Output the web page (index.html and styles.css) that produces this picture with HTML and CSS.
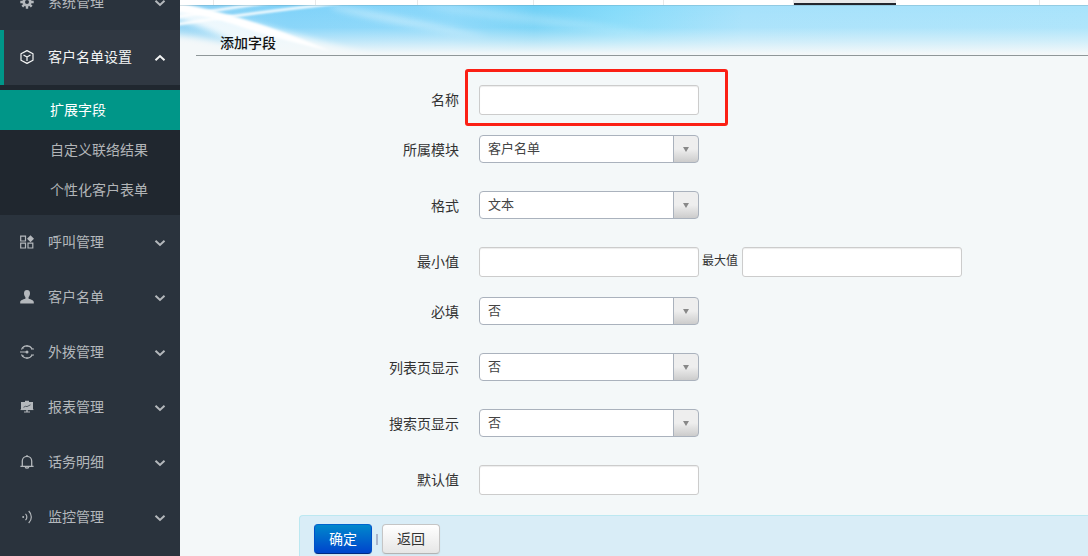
FILE: index.html
```html
<!DOCTYPE html>
<html lang="zh-CN">
<head>
<meta charset="utf-8">
<title>添加字段</title>
<link rel="stylesheet" href="styles.css">
</head>
<body>
<svg class="sprite" aria-hidden="true">
  <symbol id="chevron" viewBox="0 0 12 8"><path d="M1.500 1.800L6 6l4.500-4.200" fill="none" stroke="currentColor" stroke-width="2"/></symbol>
</svg>
<div class="app">
  <nav class="sidebar">
    <ul class="menu">
      <li><a class="menu-link" href="#">
        <svg class="icon" viewBox="0 0 14 14"><circle cx="7" cy="7" r="3.3" fill="none" stroke="currentColor" stroke-width="2.6"/><path d="M7 .3v3M7 10.700v3M.3 7h3M10.700 7h3M2.300 2.300l2 2M9.700 9.700l2 2M2.300 11.700l2-2M9.700 4.300l2-2" stroke="currentColor" stroke-width="2.400"/></svg>
        <span class="menu-text">系统管理</span><svg class="chevron"><use href="#chevron"/></svg></a></li>
      <li><a class="menu-link is-open" href="#">
        <svg class="icon" viewBox="0 0 14 14"><path d="M7 .6l6 3.200v6.400L7 13.400 1 10.200V3.800zM3.500 4.900L7 7l3.500-2.100M7 7v4" fill="none" stroke="currentColor" stroke-width="1.200" stroke-linejoin="round"/></svg>
        <span class="menu-text">客户名单设置</span><svg class="chevron chevron-up"><use href="#chevron"/></svg></a>
        <ul class="submenu">
          <li><a class="submenu-link is-current" href="#">扩展字段</a></li>
          <li><a class="submenu-link" href="#">自定义联络结果</a></li>
          <li><a class="submenu-link" href="#">个性化客户表单</a></li>
        </ul></li>
      <li><a class="menu-link" href="#">
        <svg class="icon" viewBox="0 0 14 14"><path d="M.7 1.200h4.800V6H.7zM.7 8.200h4.800V13H.7zM8 8.200h4.800V13H8z" fill="none" stroke="currentColor" stroke-width="1.200"/><path d="M10.500.2l3.500 3.500-3.500 3.500L7 3.700z" fill="currentColor"/></svg>
        <span class="menu-text">呼叫管理</span><svg class="chevron"><use href="#chevron"/></svg></a></li>
      <li><a class="menu-link" href="#">
        <svg class="icon" viewBox="0 0 14 14"><path d="M7 0c2 0 3 1.200 3 3.300 0 2-.7 3-1.400 3.800v1.600c2.600.8 5.200 1.500 5.200 3.500v1.300H.2v-1.300c0-2 2.600-2.700 5.200-3.500V7.100C4.700 6.300 4 5.300 4 3.300 4 1.200 5 0 7 0z" fill="currentColor"/></svg>
        <span class="menu-text">客户名单</span><svg class="chevron"><use href="#chevron"/></svg></a></li>
      <li><a class="menu-link" href="#">
        <svg class="icon" viewBox="0 0 14 14"><path d="M1.500 4.500A6 6 0 0 1 12.200 4M1.500 9.500A6 6 0 0 0 12.200 10M0 7h7" fill="none" stroke="currentColor" stroke-width="1.200"/><circle cx="7" cy="7" r="1.500" fill="currentColor"/><path d="M7 0v2M7 12v2M11 4h3M11 10h3M2 2.500l1.500 1M2 11.500l1.500-1" stroke="currentColor"/></svg>
        <span class="menu-text">外拨管理</span><svg class="chevron"><use href="#chevron"/></svg></a></li>
      <li><a class="menu-link" href="#">
        <svg class="icon" viewBox="0 0 14 14"><path d="M5 .8h4V2h4v8H7.700v1.500H10v1H4v-1h2.300V10H1V2h4z" fill="currentColor"/><path d="M.5 9.600h13" stroke="currentColor" stroke-width=".8"/><path class="icon-cut" d="M3.500 7.300l2-1 1.500.3 3.500-1.800" fill="none" stroke-width=".7"/></svg>
        <span class="menu-text">报表管理</span><svg class="chevron"><use href="#chevron"/></svg></a></li>
      <li><a class="menu-link" href="#">
        <svg class="icon" viewBox="0 0 14 14"><path d="M.4 11.400h13.200M2.300 11.200V6a4.700 4.700 0 0 1 9.400 0v5.200M7 0v1.500M5.300 12c.4 1.600 3 1.600 3.400 0" fill="none" stroke="currentColor" stroke-width="1.300"/></svg>
        <span class="menu-text">话务明细</span><svg class="chevron"><use href="#chevron"/></svg></a></li>
      <li><a class="menu-link" href="#">
        <svg class="icon" viewBox="0 0 14 14"><circle cx="3.200" cy="7" r="1" fill="currentColor"/><path d="M5.500 3.800c1.800 1.800 1.800 4.600 0 6.400M8.700 1c3.500 3.300 3.500 8.700 0 12" fill="none" stroke="currentColor" stroke-width="1.200"/></svg>
        <span class="menu-text">监控管理</span><svg class="chevron"><use href="#chevron"/></svg></a></li>
    </ul>
  </nav>

  <main class="main">
    <div class="tabs">
      <span class="tab tab-home"></span><span class="tab tab-s"></span><span class="tab tab-s"></span><span class="tab tab-m"></span><span class="tab tab-l"></span><span class="tab tab-l"></span><span class="tab tab-s is-active"></span><span class="tab tab-xl"></span>
    </div>
    <header class="banner">
      <svg class="banner-art" viewBox="0 0 908 50" preserveAspectRatio="none" aria-hidden="true">
        <defs>
          <linearGradient id="sky" x1="0" x2="1" y1="0" y2="0">
            <stop offset="0" stop-color="#8fd3f5"/><stop offset=".12" stop-color="#7fd2f9"/><stop offset=".3" stop-color="#88d7fa"/><stop offset=".39" stop-color="#6fd0f6"/><stop offset=".48" stop-color="#84dbfa"/><stop offset=".62" stop-color="#a5e1fb"/><stop offset="1" stop-color="#a8e3fb"/>
          </linearGradient>
          <linearGradient id="fade" x1="0" x2="0" y1="0" y2="1">
            <stop offset="0" stop-color="#f4f8f9" stop-opacity="0"/><stop offset=".45" stop-color="#f4f8f9" stop-opacity=".1"/><stop offset=".7" stop-color="#f4f8f9" stop-opacity=".5"/><stop offset=".95" stop-color="#f4f8f9" stop-opacity=".95"/><stop offset="1" stop-color="#f4f8f9"/>
          </linearGradient>
          <filter id="soft" x="-20%" y="-50%" width="140%" height="200%"><feGaussianBlur stdDeviation="1"/></filter>
          <filter id="softer" x="-20%" y="-50%" width="140%" height="200%"><feGaussianBlur stdDeviation="3"/></filter>
        </defs>
        <rect width="908" height="50" fill="url(#sky)"/>
        <path d="M-10 30Q40 33 110 60H-10z" fill="#f4f8f9" filter="url(#softer)"/>
        <path d="M-10 -2Q40 12 80 20Q130 34 230 60H90Q50 30 -10 12z" fill="#fff" opacity=".85" filter="url(#softer)"/>
        <path d="M150 3Q220 23 310 32Q220 10 155 1z" fill="#fff" opacity=".4" filter="url(#softer)"/>
        <path d="M235 0Q330 21 470 28Q350 6 260 0z" fill="#fff" opacity=".2" filter="url(#softer)"/>
        <rect width="908" height="50" fill="url(#fade)"/>
        <path d="M-12 -4Q30 4 66 15Q100 25 150 46Q90 32 55 20Q25 11 -12 5z" fill="#fff" filter="url(#soft)"/>
        <g fill="none" stroke="#fff" filter="url(#soft)">
          <path d="M-8 20Q70 8 160-2" stroke-width="2.500"/>
          <path d="M-8 13Q40 4 95-3" stroke-width="2.500"/>
        </g>
        <path d="M0 .5H908" stroke="#5b8a9c" opacity=".25"/>
      </svg>
      <h1 class="title">添加字段</h1>
    </header>

    <form class="form">
      <div class="row">
        <label class="label" for="name">名称</label>
        <div class="controls"><span class="highlighted"><input class="input" id="name" type="text"></span></div>
      </div>
      <div class="row row-select">
        <label class="label" for="module">所属模块</label>
        <div class="controls"><span class="select"><select id="module"><option>客户名单</option></select></span></div>
      </div>
      <div class="row row-select">
        <label class="label" for="format">格式</label>
        <div class="controls"><span class="select"><select id="format"><option>文本</option></select></span></div>
      </div>
      <div class="row">
        <label class="label" for="min">最小值</label>
        <div class="controls"><input class="input" id="min" type="text"><label class="inline-label" for="max">最大值</label><input class="input" id="max" type="text"></div>
      </div>
      <div class="row row-select">
        <label class="label" for="required">必填</label>
        <div class="controls"><span class="select"><select id="required"><option>否</option><option>是</option></select></span></div>
      </div>
      <div class="row row-select">
        <label class="label" for="inlist">列表页显示</label>
        <div class="controls"><span class="select"><select id="inlist"><option>否</option><option>是</option></select></span></div>
      </div>
      <div class="row row-select">
        <label class="label" for="insearch">搜索页显示</label>
        <div class="controls"><span class="select"><select id="insearch"><option>否</option><option>是</option></select></span></div>
      </div>
      <div class="row">
        <label class="label" for="default">默认值</label>
        <div class="controls"><input class="input" id="default" type="text"></div>
      </div>
      <div class="actions">
        <button class="btn btn-primary" type="submit">确定</button>
        <span class="divider"></span>
        <button class="btn" type="button">返回</button>
      </div>
    </form>
  </main>
</div>
</body>
</html>
```
FILE: styles.css
```css
* { box-sizing: border-box; }

body {
  margin: 0;
  overflow: hidden;
  font: 14px/20px "Noto Sans CJK SC", sans-serif;
  color: #333;
  background: #f4f8f9;
}

ul { margin: 0; padding: 0; list-style: none; }
a { text-decoration: none; }
.sprite { display: none; }

.app { display: flex; height: 100vh; }

/* Sidebar */
.sidebar {
  flex: 0 0 180px;
  overflow: hidden;
  background: #2a333d;
}

/* scrolled part of the way down */
.menu { margin-top: -25px; }

.menu-link {
  display: flex;
  align-items: center;
  height: 55px;
  padding: 0 14px 2px 16px;
  border-left: 4px solid transparent;
  color: #b4b8bc;
}
.menu-link.is-open {
  border-left-color: #009688;
  background: #303842;
  color: #f4f5f5;
}
.icon { width: 14px; height: 14px; margin-right: 14px; }
.icon-cut { stroke: #2a333d; }
.menu-text { flex: 1; padding-bottom: 2px; }
.chevron { width: 12px; height: 8px; margin-top: 2px; }
.chevron-up { transform: rotate(180deg); }

.submenu { padding: 5px 0; background: #20272f; }
.submenu-link {
  display: block;
  padding: 0 0 2px 50px;
  line-height: 38px;
  color: #b2b5b8;
}
.submenu-link.is-current { background: #009688; color: #fff; }

/* Main */
.main { flex: 1; min-width: 0; overflow: hidden; }

.tabs { display: flex; height: 5px; background: #fff; }
.tab { flex: none; border-right: 1px solid #e8e8e8; }
.tab-home { width: 34px; }
.tab-s { width: 102px; }
.tab-m { width: 116px; }
.tab-l { width: 130px; }
.tab-xl { width: 144px; }
.tab.is-active {
  border-right: 0;
  border-bottom: 2px solid #23262e;
  background: #e9e9ea;
}

.banner {
  display: grid;
  grid-template-rows: 50px 1px;
}
.banner::after {
  content: "";
  grid-area: 2 / 1;
  margin-left: 16px;
  background: #8f9799;
}
.banner-art { grid-area: 1 / 1; width: 100%; height: 50px; }
.title {
  grid-area: 1 / 1;
  z-index: 1;
  margin: 0;
  padding: 27px 0 0 40px;
  font-size: 14px;
  line-height: 20px;
  font-weight: 500;
  color: #111;
}

/* Form */
.form { margin: 0 0 0 119px; padding-top: 29px; }
.row {
  display: grid;
  grid-template-columns: 160px 1fr;
  column-gap: 20px;
  margin-bottom: 20px;
}
.row-select { margin-bottom: 28px; }
.label { padding-top: 4px; text-align: right; }
.controls { display: flex; }
.inline-label { padding: 3px 4px 0 3px; font-size: 12px; }

.input {
  width: 220px;
  height: 30px;
  padding: 4px 6px;
  border: 1px solid #ccc;
  border-radius: 3px;
  background: #fff;
  box-shadow: inset 0 1px 1px rgba(0, 0, 0, .075);
}

.highlighted { position: relative; display: flex; }
.highlighted::after {
  content: "";
  position: absolute;
  inset: -16px -29px -11px -14px;
  border: 3px solid #fb2015;
  border-radius: 3px;
  pointer-events: none;
}

.select { position: relative; width: 220px; height: 28px; }
.select select {
  appearance: none;
  width: 100%;
  height: 100%;
  padding: 0 34px 2px 8px;
  border: 1px solid #aab2bd;
  border-radius: 4px;
  background: #fff linear-gradient(#eee 50%, #ccc) right / 25px 100% no-repeat;
  font: 13px/20px "Noto Sans CJK SC", sans-serif;
  color: #444;
}
.select::before {
  content: "";
  position: absolute;
  top: 1px;
  bottom: 1px;
  right: 25px;
  border-left: 1px solid #aab2bd;
}
.select::after {
  content: "";
  position: absolute;
  top: 12px;
  right: 10px;
  border: 3px solid transparent;
  border-top: 5px solid #888;
  border-bottom: 0;
  pointer-events: none;
}

.actions {
  display: flex;
  align-items: center;
  padding: 8px 14px;
  border: 1px solid #bce8f1;
  border-right: 0;
  border-radius: 4px 0 0 4px;
  background: #d9edf7;
}
.divider { width: 2px; height: 11px; margin: 0 4px; background: #a9b5cb; }

.btn {
  height: 30px;
  padding: 3px 14px 5px;
  border: 1px solid #c5c5c5;
  border-bottom-color: #b3b3b3;
  border-radius: 4px;
  background: linear-gradient(#fff, #e6e6e6);
  box-shadow: 0 1px 2px rgba(0, 0, 0, .05);
  font: 14px/20px "Noto Sans CJK SC", sans-serif;
  color: #333;
}
.btn-primary {
  border-color: #0064cd #0050c8 #002a80;
  background: linear-gradient(#08c, #04c);
  color: #fff;
}
```
